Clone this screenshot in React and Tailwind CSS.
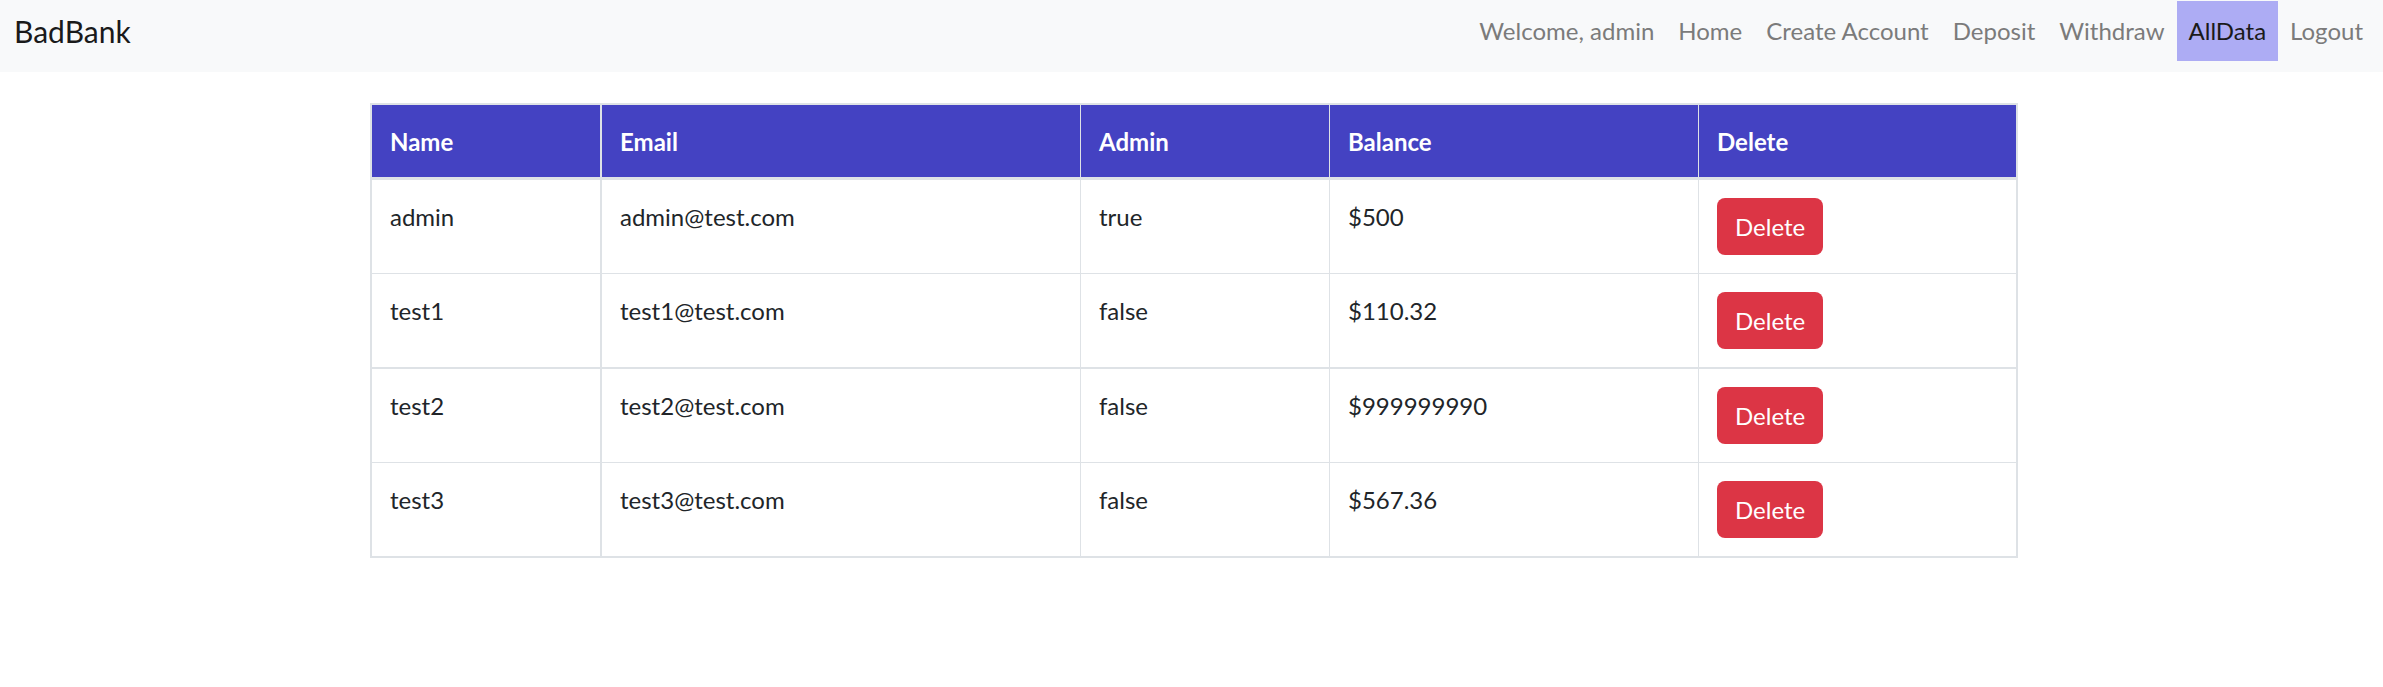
import React from "react";

const rows = [
  { name: "admin", email: "admin@test.com", admin: "true", balance: "$500", border: "border-b" },
  { name: "test1", email: "test1@test.com", admin: "false", balance: "$110.32", border: "border-b-2" },
  { name: "test2", email: "test2@test.com", admin: "false", balance: "$999999990", border: "border-b" },
  { name: "test3", email: "test3@test.com", admin: "false", balance: "$567.36", border: "" },
];

const cols = "grid grid-cols-[228px_480px_249px_369px_318px]";
const cell = "pl-[18px] pr-[18px] pt-[19px] pb-[17px]";

export default function App() {
  return (
    <div className="min-h-screen bg-white text-[#212529]" style={{ fontFamily: "Lato, 'Segoe UI', 'Noto Sans', sans-serif" }}>
      <nav className="flex h-[72px] items-start justify-between bg-[#f8f9fa] pl-[14px] pr-[8px]">
        <a className="pt-[9px] text-[30px] leading-[45px] text-[#1a1a1a]">BadBank</a>
        <div className="flex items-start pt-px text-[24px] leading-9 text-[#7b7b7b]">
          <span className="px-3 py-3">Welcome, admin</span>
          <a className="px-3 py-3">Home</a>
          <a className="px-3 py-3">Create Account</a>
          <a className="px-3 py-3">Deposit</a>
          <a className="px-3 py-3">Withdraw</a>
          <a className="bg-[#adacf4] px-3 py-3 text-[#1a1a1a]">AllData</a>
          <a className="px-3 py-3">Logout</a>
        </div>
      </nav>

      <div className="ml-[370px] mt-[31px] w-[1648px] border-2 border-[#dee2e6] text-[24px] leading-9">
        <div className={`${cols} border-b-[3px] border-[#dee2e6] bg-[#4442c2] font-bold text-white`}>
          <div className={cell}>Name</div>
          <div className={`border-l-2 border-[#dee2e6] ${cell}`}>Email</div>
          <div className={`border-l border-[#dee2e6] ${cell}`}>Admin</div>
          <div className={`border-l border-[#dee2e6] ${cell}`}>Balance</div>
          <div className={`border-l border-[#dee2e6] ${cell}`}>Delete</div>
        </div>
        {rows.map((r) => (
          <div key={r.name} className={`${cols} border-[#dee2e6] ${r.border}`}>
            <div className={`h-[93px] ${cell}`}>{r.name}</div>
            <div className={`border-l-2 border-[#dee2e6] ${cell}`}>{r.email}</div>
            <div className={`border-l border-[#dee2e6] ${cell}`}>{r.admin}</div>
            <div className={`border-l border-[#dee2e6] ${cell}`}>{r.balance}</div>
            <div className="border-l border-[#dee2e6] px-[18px] py-[18px]">
              <button className="h-[57px] rounded-[8px] bg-[#dc3545] px-[18px] text-[24px] leading-9 text-white">Delete</button>
            </div>
          </div>
        ))}
      </div>
    </div>
  );
}
